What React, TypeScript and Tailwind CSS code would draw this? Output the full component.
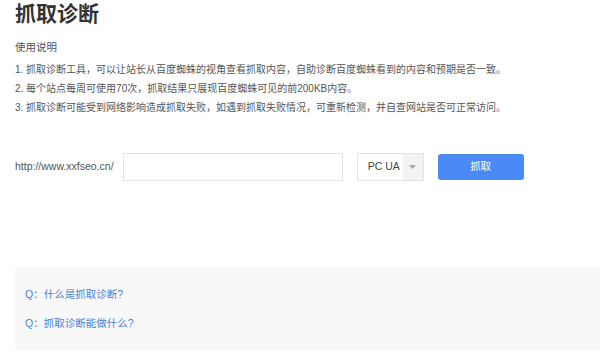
import React from 'react';

const FONT = { fontFamily: '"Liberation Sans", "Noto Sans CJK SC", sans-serif' };

const notes = [
  '1. 抓取诊断工具，可以让站长从百度蜘蛛的视角查看抓取内容，自助诊断百度蜘蛛看到的内容和预期是否一致。',
  '2. 每个站点每周可使用70次，抓取结果只展现百度蜘蛛可见的前200KB内容。',
  '3. 抓取诊断可能受到网络影响造成抓取失败，如遇到抓取失败情况，可重新检测，并自查网站是否可正常访问。',
];

const faqs = ['Q：什么是抓取诊断?', 'Q：抓取诊断能做什么?'];

export default function App() {
  return (
    <div className="min-h-[354px] bg-white pl-[15px]" style={FONT}>
      <h1 className="h-[28px] text-[21px] font-bold leading-[28px] text-[#333]">抓取诊断</h1>

      <div className="mt-[10px] text-[10.5px] leading-[19px] text-[#555]">
        <p>使用说明</p>
        <ul className="mt-[3px] text-[10px]">
          {notes.map((n) => (
            <li key={n}>{n}</li>
          ))}
        </ul>
      </div>

      <div className="mt-[36px] flex h-[28px] items-center text-[10.5px] text-[#555]">
        <span className="mr-[9px]">http://www.xxfseo.cn/</span>
        <input
          type="text"
          className="h-[28px] w-[220px] border border-[#e3e3e3] bg-white px-2 outline-none"
        />
        <div className="ml-[14px] flex h-[28px] w-[67px] border border-[#e3e3e3] bg-white">
          <span className="flex flex-1 items-center pl-[10px] text-[#444]">PC UA</span>
          <span className="flex w-[20px] items-center justify-center bg-[#f3f3f3]">
            <svg width="7" height="4" viewBox="0 0 7 4">
              <path d="M0 0h7L3.5 4z" fill="#aaa" />
            </svg>
          </span>
        </div>
        <button className="ml-[14px] h-[26px] w-[86px] rounded-[3px] bg-[#4a8af4] text-[10.5px] text-white">
          抓取
        </button>
      </div>

      <div className="mt-[86px] h-[83px] bg-[#f8f8f8] pl-[10px] pt-[18px] text-[10.5px] leading-[19px] text-[#4a7fd6]">
        {faqs.map((q, i) => (
          <p key={q} className={i > 0 ? 'mt-[10px]' : ''}>
            {q}
          </p>
        ))}
      </div>
    </div>
  );
}
